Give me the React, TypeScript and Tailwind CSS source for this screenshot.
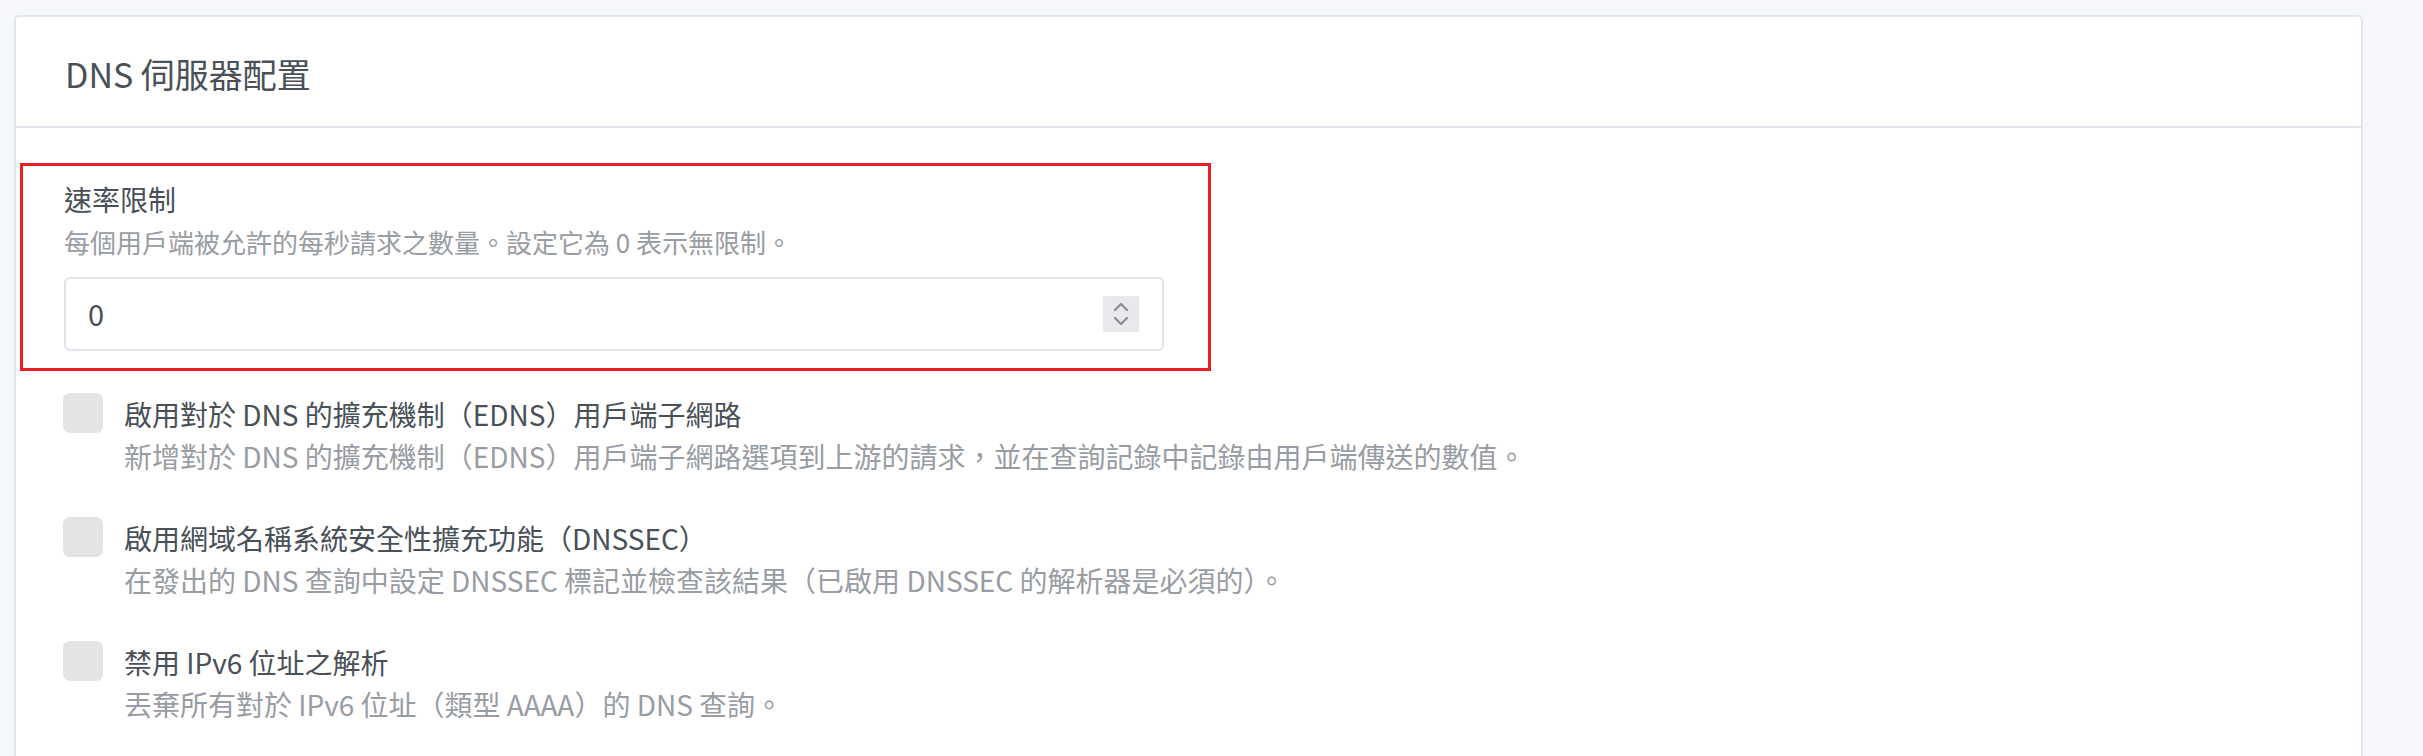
import React from "react";

const FONT = { fontFamily: '"Noto Sans CJK TC", "Noto Sans", sans-serif' };

function Row({ label, desc }: { label: string; desc: string }) {
  return (
    <div className="flex items-start">
      <div className="w-[40px] h-[40px] shrink-0 rounded-[7px] bg-[#e4e4e4]" />
      <div className="ml-[21px]">
        <div className="text-[28px] leading-[42px] text-[#495057] whitespace-nowrap">{label}</div>
        <div className="text-[28px] leading-[42px] text-[#989ca3] whitespace-nowrap">{desc}</div>
      </div>
    </div>
  );
}

export default function App() {
  return (
    <div className="w-[2423px] h-[756px] overflow-hidden bg-[#f5f7fb]" style={FONT}>
      <div className="ml-[14px] mt-[15px] w-[2349px] h-[900px] bg-white border-2 border-[#e2e6ec] rounded-[5px]">
        <div className="border-b-2 border-[#e2e6ec] pl-[49px] pt-[37px] pb-[32px]">
          <div className="text-[34px] leading-[40px] text-[#495057]">DNS 伺服器配置</div>
        </div>
        <div className="pl-[4px] pt-[35px]">
          <div className="w-[1191px] border-[3px] border-[#e81e25] pl-[41px] pt-[13px] pb-[17px]">
            <div className="text-[28px] leading-[40px] text-[#495057]">速率限制</div>
            <div className="mt-[5px] text-[26px] leading-[36px] text-[#989ca3] whitespace-nowrap">
              每個用戶端被允許的每秒請求之數量。設定它為 0 表示無限制。
            </div>
            <div className="mt-[17px] w-[1100px] h-[74px] border-2 border-[#dfe3e9] rounded-[6px] flex items-center justify-between pl-[22px] pr-[23px]">
              <span className="text-[29px] text-[#495057]">0</span>
              <div className="w-[36px] h-[36px] bg-[#e8e8ed] flex items-center justify-center">
                <svg width="16" height="26" viewBox="0 0 16 26" fill="none" stroke="#8b8b96" strokeWidth="2.2" strokeLinecap="round" strokeLinejoin="round">
                  <path d="M2 9 L8 3 L14 9" />
                  <path d="M2 17 L8 23 L14 17" />
                </svg>
              </div>
            </div>
          </div>
          <div className="pl-[43px] pt-[22px] flex flex-col gap-[40px]">
            <Row
              label="啟用對於 DNS 的擴充機制（EDNS）用戶端子網路"
              desc="新增對於 DNS 的擴充機制（EDNS）用戶端子網路選項到上游的請求，並在查詢記錄中記錄由用戶端傳送的數值。"
            />
            <Row
              label="啟用網域名稱系統安全性擴充功能（DNSSEC）"
              desc="在發出的 DNS 查詢中設定 DNSSEC 標記並檢查該結果（已啟用 DNSSEC 的解析器是必須的）。"
            />
            <Row
              label="禁用 IPv6 位址之解析"
              desc="丟棄所有對於 IPv6 位址（類型 AAAA）的 DNS 查詢。"
            />
          </div>
        </div>
      </div>
    </div>
  );
}
